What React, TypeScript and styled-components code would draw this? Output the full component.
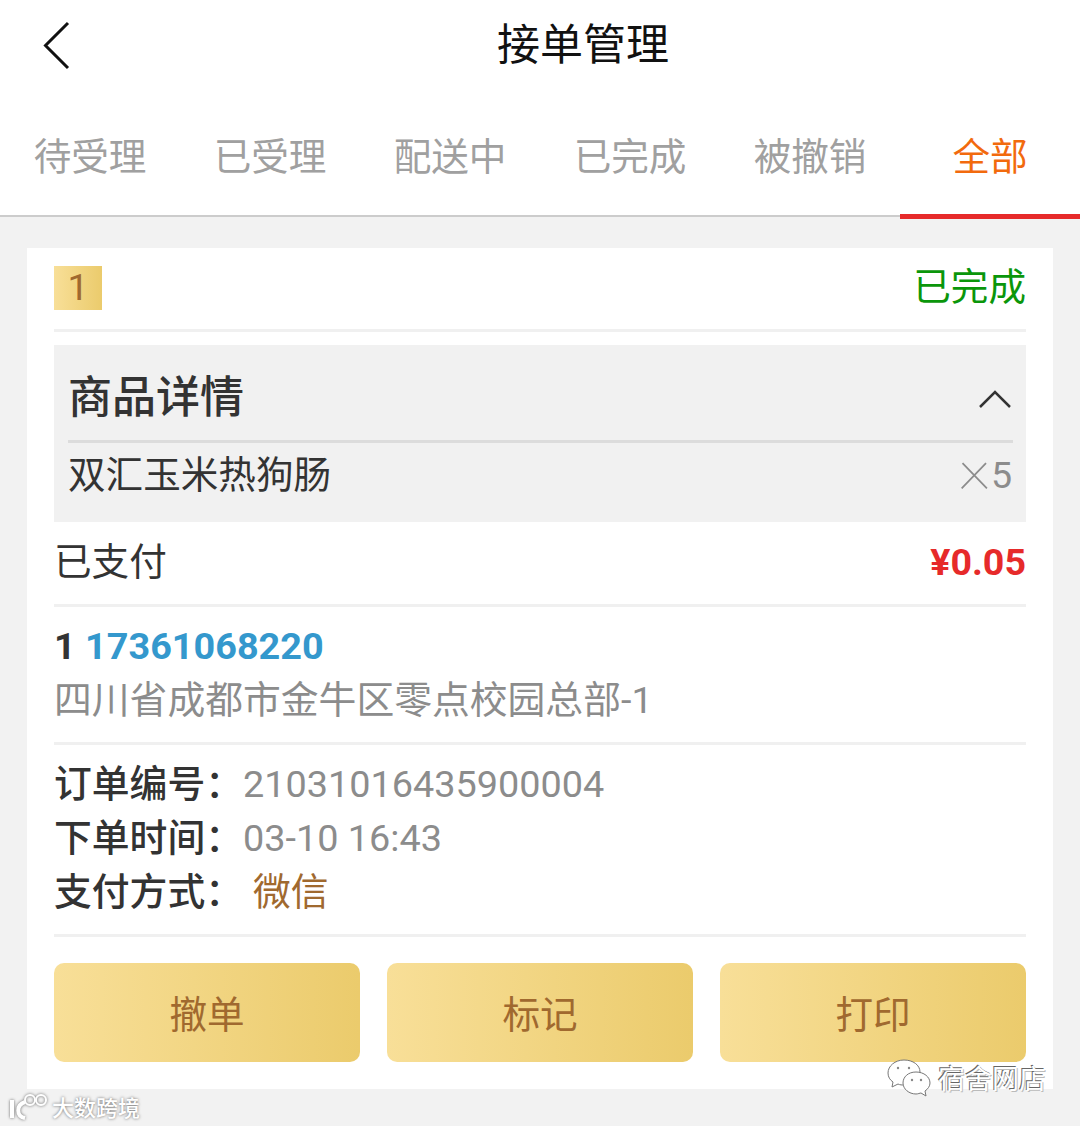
import styled, { createGlobalStyle } from 'styled-components';

const GlobalStyle = createGlobalStyle`
  html, body {
    margin: 0;
    padding: 0;
    background: #f2f2f2;
  }
  * {
    box-sizing: border-box;
  }
`;

const gold = 'linear-gradient(90deg, #f8df98, #ebcb6c)';

const Page = styled.div`
  position: relative;
  width: 1080px;
  height: 1126px;
  overflow: hidden;
  background: #f2f2f2;
  font-family: Roboto, "Noto Sans CJK SC", sans-serif;
  color: #333;
`;

const Header = styled.header`
  position: relative;
  display: flex;
  align-items: center;
  justify-content: center;
  height: 90px;
  padding: 0 0 8px 86px;
  background: #fff;
`;

const BackIcon = styled.svg`
  position: absolute;
  left: 40px;
  top: 20px;
`;

const Title = styled.h1`
  margin: 0;
  font-size: 43px;
  font-weight: 400;
  color: #111;
`;

const Tabs = styled.nav`
  display: grid;
  grid-template-columns: repeat(6, 180px);
  height: 127px;
  background: #fff;
  border-bottom: 2px solid #ccc;
`;

const Tab = styled.div<{ $active?: boolean }>`
  display: flex;
  align-items: center;
  justify-content: center;
  height: 129px;
  padding-top: ${(props) => (props.$active ? '2px' : '0')};
  padding-bottom: ${(props) => (props.$active ? '0' : '3px')};
  font-size: 37.6px;
  color: ${(props) => (props.$active ? '#f26a0d' : '#a0a0a0')};
  border-bottom: ${(props) => (props.$active ? '5px solid #e62a2a' : 'none')};
`;

const Card = styled.section`
  margin: 31px 27px 0;
  height: 841px;
  padding: 18px 27px 0;
  background: #fff;
`;

const CardTop = styled.div`
  display: flex;
  align-items: flex-start;
  justify-content: space-between;
  height: 66px;
  border-bottom: 3px solid #f0f0f0;
`;

const Badge = styled.div`
  width: 48px;
  height: 44px;
  padding-bottom: 2px;
  display: flex;
  align-items: center;
  justify-content: center;
  background: ${gold};
  color: #a0692f;
  font-size: 37.6px;
`;

const Status = styled.div`
  font-size: 37.6px;
  line-height: 42px;
  color: #0a960a;
`;

const Goods = styled.div`
  margin-top: 13px;
  height: 177px;
  padding: 0 13px 0 14px;
  background: #f1f1f1;
`;

const GoodsHead = styled.div`
  display: flex;
  align-items: center;
  justify-content: space-between;
  height: 98px;
  border-bottom: 3px solid #dcdcdc;
`;

const GoodsTitle = styled.h2`
  margin: 0;
  padding-top: 2px;
  font-size: 44px;
  font-weight: 500;
  color: #333;
`;

const Chevron = styled.svg`
  margin: 12px 1px 0 0;
`;

const GoodsItem = styled.div`
  display: flex;
  align-items: center;
  justify-content: space-between;
  height: 66px;
  padding-bottom: 10px;
  font-size: 37.6px;
`;

const Quantity = styled.span`
  display: flex;
  align-items: center;
  height: 44px;
  margin-top: 8px;
  padding-right: 1px;
  color: #8c8c8c;
`;

const Times = styled.span`
  margin-bottom: 14px;
  font-size: 64px;
  font-weight: 100;
  line-height: 44px;
`;

const PayRow = styled.div`
  display: flex;
  align-items: center;
  justify-content: space-between;
  height: 85px;
  padding-bottom: 2px;
  border-bottom: 3px solid #f0f0f0;
  font-size: 37.6px;
`;

const PayLabel = styled.span`
  margin-bottom: 8px;
`;

const Price = styled.span`
  font-weight: 700;
  color: #e62a2a;
`;

const Customer = styled.div`
  height: 138px;
  padding-top: 12px;
  border-bottom: 3px solid #f0f0f0;
`;

const Contact = styled.div`
  height: 54px;
  line-height: 54px;
  font-size: 37.8px;
  font-weight: 700;
`;

const Phone = styled.span`
  color: #3498cd;
`;

const Address = styled.div`
  height: 54px;
  line-height: 54px;
  font-size: 37.8px;
  color: #8c8c8c;
`;

const Meta = styled.div`
  height: 192px;
  padding-top: 12px;
  border-bottom: 3px solid #f0f0f0;
`;

const MetaRow = styled.div`
  display: flex;
  height: 54px;
  line-height: 54px;
  font-size: 37.8px;
`;

const MetaLabel = styled.span`
  width: 189px;
  font-weight: 500;
`;

const MetaValue = styled.span<{ $brown?: boolean }>`
  color: ${(props) => (props.$brown ? '#a0692f' : '#8c8c8c')};
  margin-left: ${(props) => (props.$brown ? '10px' : '0')};
`;

const Actions = styled.div`
  display: grid;
  grid-template-columns: repeat(3, 306px);
  gap: 27px;
  margin-top: 26px;
`;

const ActionButton = styled.button`
  height: 99px;
  padding: 0 0 3px;
  border: none;
  border-radius: 10px;
  background: ${gold};
  color: #a0692f;
  font-family: inherit;
  font-size: 37.6px;
`;

const MarkOne = styled.div`
  position: absolute;
  left: 887px;
  top: 1058px;
  display: flex;
  align-items: center;
  gap: 7px;
  font-size: 27px;
  color: #fff;
  text-shadow: -1px -1px 0 #666, 1px 1px 0 #bbb;
`;

const MarkTwo = styled.div`
  position: absolute;
  left: 9px;
  top: 1090px;
  display: flex;
  align-items: center;
  gap: 3px;
  font-size: 22px;
  font-weight: 500;
  color: #fff;
  text-shadow: 0 0 3px #666;
`;

const MarkLogo = styled.svg`
  filter: drop-shadow(0 0 1.5px #666);
`;

function App(): JSX.Element {
  return (
    <Page>
      <GlobalStyle />
      <Header>
        <BackIcon width="32" height="52" viewBox="0 0 32 52" fill="none" stroke="#111" strokeWidth="3">
          <path d="M28 3 L5.5 25.5 L28 48" />
        </BackIcon>
        <Title>接单管理</Title>
      </Header>
      <Tabs>
        <Tab>待受理</Tab>
        <Tab>已受理</Tab>
        <Tab>配送中</Tab>
        <Tab>已完成</Tab>
        <Tab>被撤销</Tab>
        <Tab $active>全部</Tab>
      </Tabs>
      <Card>
        <CardTop>
          <Badge>1</Badge>
          <Status>已完成</Status>
        </CardTop>
        <Goods>
          <GoodsHead>
            <GoodsTitle>商品详情</GoodsTitle>
            <Chevron width="34" height="20" viewBox="0 0 34 20" fill="none" stroke="#333" strokeWidth="2.5">
              <path d="M2 18 L17 3 L32 18" />
            </Chevron>
          </GoodsHead>
          <GoodsItem>
            <span>双汇玉米热狗肠</span>
            <Quantity>
              <Times>×</Times>
              5
            </Quantity>
          </GoodsItem>
        </Goods>
        <PayRow>
          <PayLabel>已支付</PayLabel>
          <Price>¥0.05</Price>
        </PayRow>
        <Customer>
          <Contact>
            1 <Phone>17361068220</Phone>
          </Contact>
          <Address>四川省成都市金牛区零点校园总部-1</Address>
        </Customer>
        <Meta>
          <MetaRow>
            <MetaLabel>订单编号：</MetaLabel>
            <MetaValue>21031016435900004</MetaValue>
          </MetaRow>
          <MetaRow>
            <MetaLabel>下单时间：</MetaLabel>
            <MetaValue>03-10 16:43</MetaValue>
          </MetaRow>
          <MetaRow>
            <MetaLabel>支付方式：</MetaLabel>
            <MetaValue $brown>微信</MetaValue>
          </MetaRow>
        </Meta>
        <Actions>
          <ActionButton>撤单</ActionButton>
          <ActionButton>标记</ActionButton>
          <ActionButton>打印</ActionButton>
        </Actions>
      </Card>
      <MarkOne>
        <svg width="44" height="38" viewBox="0 0 44 38" fill="#fff" stroke="#777" strokeWidth="1">
          <path d="M17 1 C8 1 1 7 1 14 C1 18 3 21 6 23 L5 28 L11 25 C13 26 15 26 17 26 C27 26 33 20 33 13 C33 6 26 1 17 1 Z" />
          <path d="M29 13 C21 13 16 18 16 24 C16 30 22 35 29 35 C31 35 33 34 34 34 L39 37 L38 32 C41 30 43 27 43 24 C43 18 37 13 29 13 Z" />
          <circle cx="11" cy="9" r="1.2" fill="#888" stroke="none" />
          <circle cx="22" cy="9" r="1.2" fill="#888" stroke="none" />
          <circle cx="25" cy="21" r="1.2" fill="#888" stroke="none" />
          <circle cx="34" cy="21" r="1.2" fill="#888" stroke="none" />
        </svg>
        <span>宿舍网店</span>
      </MarkOne>
      <MarkTwo>
        <MarkLogo width="40" height="30" viewBox="0 0 40 30" fill="none" stroke="#fff" strokeWidth="4">
          <path d="M3 9 V27 M16 11 C7 14 7 25 16 27" />
          <circle cx="21" cy="9" r="5" strokeWidth="2" />
          <circle cx="32" cy="9" r="5" strokeWidth="2" />
        </MarkLogo>
        <span>大数跨境</span>
      </MarkTwo>
    </Page>
  );
}

export default App;
